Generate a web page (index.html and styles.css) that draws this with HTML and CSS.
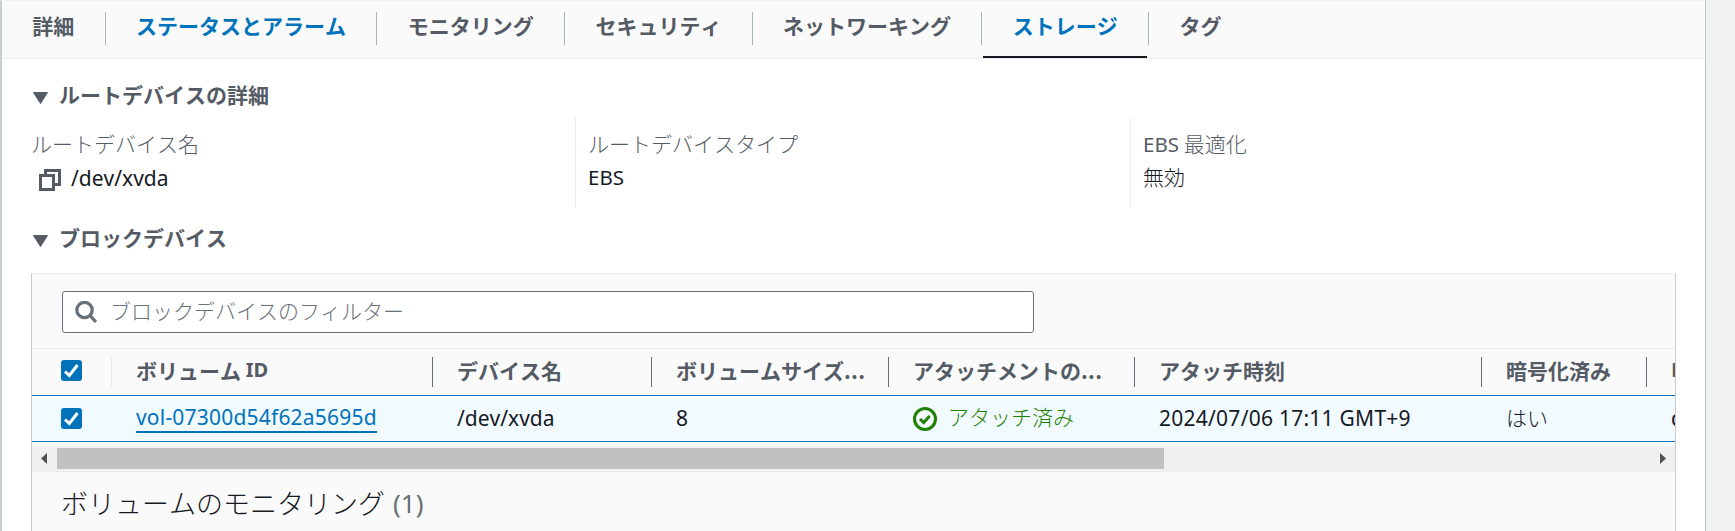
FILE: index.html
```html
<!DOCTYPE html>
<html lang="ja">
<head>
<meta charset="utf-8">
<title>ストレージ</title>
<link rel="stylesheet" href="styles.css">
</head>
<body>
<main class="panel">
  <nav class="tabs">
    <a class="tab">詳細</a>
    <a class="tab tab-link">ステータスとアラーム</a>
    <a class="tab">モニタリング</a>
    <a class="tab">セキュリティ</a>
    <a class="tab">ネットワーキング</a>
    <a class="tab tab-link tab-active">ストレージ</a>
    <a class="tab">タグ</a>
  </nav>

  <h2 class="section-title"><svg class="caret" viewBox="0 0 15 12"><path d="M0.500 0.500h14L7.500 11.500z"/></svg><span>ルートデバイスの詳細</span></h2>
  <section class="fields">
    <div class="field">
      <div class="label">ルートデバイス名</div>
      <div class="value value-copy">
        <svg class="copy" viewBox="0 0 22 22"><path d="M1.500 6.500h13v14h-13zM6.500 6V1.500h14v14H15"/></svg>
        <span class="latin">/dev/xvda</span>
      </div>
    </div>
    <div class="field">
      <div class="label">ルートデバイスタイプ</div>
      <div class="value"><span class="latin abbr">EBS</span></div>
    </div>
    <div class="field">
      <div class="label"><span class="latin abbr">EBS</span> 最適化</div>
      <div class="value">無効</div>
    </div>
  </section>

  <h2 class="section-title section-block"><svg class="caret" viewBox="0 0 15 12"><path d="M0.500 0.500h14L7.500 11.500z"/></svg><span>ブロックデバイス</span></h2>
  <section class="card">
    <div class="toolbar">
      <div class="search">
        <svg class="search-icon" viewBox="0 0 22 22"><circle cx="9.500" cy="9" r="7.700"/><path d="M15 14.500l6 6.500"/></svg>
        <span>ブロックデバイスのフィルター</span>
      </div>
    </div>
    <div class="row head">
      <div class="cell cell-check"><span class="check"><svg viewBox="0 0 21 21"><path d="M4 11.500l4.300 4L16.500 5"/></svg></span></div>
      <div class="cell">ボリューム <span class="latin">ID</span></div>
      <div class="cell">デバイス名</div>
      <div class="cell">ボリュームサイズ<span class="dots">...</span></div>
      <div class="cell">アタッチメントの<span class="dots">...</span></div>
      <div class="cell">アタッチ時刻</div>
      <div class="cell">暗号化済み</div>
      <div class="cell"><span class="latin">K</span></div>
    </div>
    <div class="row selected">
      <div class="cell cell-check"><span class="check"><svg viewBox="0 0 21 21"><path d="M4 11.500l4.300 4L16.500 5"/></svg></span></div>
      <div class="cell"><a class="volume latin">vol-07300d54f62a5695d</a></div>
      <div class="cell latin">/dev/xvda</div>
      <div class="cell latin">8</div>
      <div class="cell status"><svg viewBox="0 0 24 24"><circle cx="12" cy="12" r="10.500"/><path d="M7 12l3.700 3.500 6-6.500"/></svg><span>アタッチ済み</span></div>
      <div class="cell latin date">2024/07/06 17:11 GMT+9</div>
      <div class="cell cjk">はい</div>
      <div class="cell latin">d</div>
    </div>
    <div class="scrollbar">
      <svg class="arrow" viewBox="0 0 6 11"><path d="M6 0v11L0 5.500z"/></svg>
      <div class="track"><div class="thumb"></div></div>
      <svg class="arrow" viewBox="0 0 6 11"><path d="M0 0v11l6-5.500z"/></svg>
    </div>
    <h3 class="monitor">ボリュームのモニタリング<span class="count">(1)</span></h3>
  </section>
</main>
</body>
</html>
```

FILE: styles.css
```css
* { box-sizing: border-box; }

body {
  margin: 0;
  height: 531px;
  overflow: hidden;
  background: #f1f3f3;
  color: #16191f;
  font-family: "Noto Sans CJK JP", sans-serif;
  font-size: 21px;
  font-weight: 300;
  font-kerning: none;
  line-height: 30px;
}

.latin {
  font-family: "Noto Sans", sans-serif;
  font-weight: 400;
  font-size: 21px;
}

.abbr { font-size: 20.5px; }

.panel {
  width: 1706px;
  height: 531px;
  border-top: 1px solid #f1f2f2;
  border-left: 2px solid #c8cdcd;
  border-right: 1px solid #bfc5c5;
  background: #fff;
  overflow: hidden;
}

.tabs {
  display: flex;
  height: 58px;
  padding-top: 11px;
  background: #fafafa;
  border-bottom: 1px solid #eaeded;
}

.tab {
  position: relative;
  height: 33px;
  padding: 0 30.35px;
  border-right: 1px solid #aab7b8;
  color: #545b64;
  font-weight: 700;
  line-height: 26px;
  white-space: nowrap;
}

.tab:last-child { border: 0; }
.tab-link { color: #0073bb; }

.tab-active::after {
  content: "";
  position: absolute;
  left: 1px;
  right: 1px;
  bottom: -13px;
  height: 2px;
  background: #16191f;
}

.section-title {
  display: flex;
  align-items: center;
  gap: 11px;
  margin: 21px 0 0 31px;
  height: 30px;
  color: #545b64;
  font-size: 21px;
  font-weight: 700;
}

.section-title span { padding-bottom: 2px; }

.caret {
  width: 15px;
  height: 12px;
  margin-top: 5px;
  fill: #545b64;
  stroke: #545b64;
  stroke-linejoin: round;
}

.fields {
  display: grid;
  grid-template-columns: 544px 555px 1fr;
  margin: 8px 0 0 29px;
  height: 90px;
}

.field { padding: 10px 0 0 12px; border-left: 1px solid #eaeded; }
.field:first-child { padding-left: 0; border: 0; }
.label { color: #545b64; height: 33px; }

.value-copy {
  display: flex;
  align-items: center;
  gap: 10px;
  padding: 2px 0 0 8px;
}

.copy {
  width: 22px;
  height: 22px;
  margin-top: 3px;
  fill: none;
  stroke: #545b64;
  stroke-width: 3;
}

.section-block { margin-top: 15px; }

.card {
  width: 1645px;
  height: 260px;
  margin: 20px 0 0 29px;
  border: 1px solid #c6cccc;
  border-top-color: #eaeded;
  border-bottom: 0;
  background: #fafafa;
  overflow: hidden;
}

.toolbar {
  height: 75px;
  padding: 17px 0 0 30px;
  border-bottom: 1px solid #eaeded;
}

.search {
  display: flex;
  align-items: center;
  gap: 13px;
  width: 972px;
  height: 42px;
  padding: 0 0 1px 12px;
  border: 1px solid #687078;
  border-radius: 3px;
  background: #fff;
  color: #687078;
}

.search span { padding-bottom: 4px; }

.search-icon {
  width: 22px;
  height: 22px;
  margin-top: 1px;
  fill: none;
  stroke: #687078;
  stroke-width: 3.2;
}

.row {
  display: grid;
  grid-template-columns: 80px 321px 219px 237px 246px 347px 165px 28px;
  width: 1643px;
}

.cell {
  display: flex;
  align-items: center;
  padding-left: 24px;
  padding-bottom: 2px;
  white-space: pre;
}

.head {
  height: 46px;
  padding: 8px 0;
  color: #545b64;
  font-weight: 700;
  line-height: 24px;
}

.head .cell { height: 30px; border-right: 1px solid #687078; padding-bottom: 4px; }
.head .cell:last-child { border: 0; }
.head .latin { font-size: 20px; font-weight: 700; }
.head .cell-check { border-color: #eaeded; }
.dots { letter-spacing: 0.3px; }

.selected {
  height: 47px;
  border: 1px solid #0073bb;
  border-width: 1px 0;
  background: #f1faff;
}

.cell.cell-check { padding-left: 29px; }
.selected .cell-check { padding-bottom: 0; }
.selected .cjk { padding-bottom: 4px; }

.check {
  display: flex;
  width: 21px;
  height: 21px;
  border-radius: 3px;
  background: #0073bb;
}

.check svg {
  width: 21px;
  height: 21px;
  fill: none;
  stroke: #fff;
  stroke-width: 3;
}

.volume {
  height: 27px;
  margin-top: 4px;
  line-height: 22px;
  letter-spacing: 0.2px;
  border-bottom: 2px solid #0073bb;
  color: #0073bb;
}

.date { letter-spacing: 0.25px; }

.status { gap: 11px; padding-bottom: 0; color: #1d8102; }
.status span { padding-bottom: 5px; }

.status svg {
  width: 24px;
  height: 24px;
  fill: none;
  stroke: #1d8102;
  stroke-width: 3;
}

.scrollbar {
  display: flex;
  align-items: center;
  justify-content: space-between;
  height: 30px;
  padding: 0 9px;
  border-top: 4px solid #fff;
  border-bottom: 1px solid #eaeded;
  background: #f0f0f0;
}

.arrow { width: 6px; height: 11px; fill: #505050; }
.track { width: 1594px; height: 21px; }
.thumb { width: 1107px; height: 21px; background: #c1c1c1; }

.monitor {
  display: flex;
  gap: 8px;
  margin: 12px 0 0 29px;
  font-size: 27px;
  font-weight: 300;
  line-height: 38px;
}

.count {
  color: #687078;
  font-family: "Noto Sans", sans-serif;
  font-size: 26px;
  font-weight: 400;
}
```
